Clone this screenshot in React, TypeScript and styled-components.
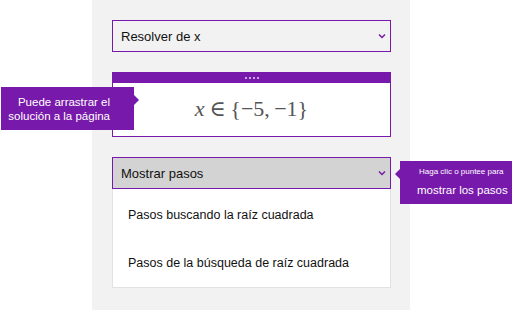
import * as React from 'react';
import styled, {createGlobalStyle} from 'styled-components';

const purple = '#7719aa';

const GlobalStyle = createGlobalStyle`
    body {
        margin: 0;
        background: #ffffff;
        font-family: "Liberation Sans", Arial, sans-serif;
    }
`;

const Page = styled.div`
    position: relative;
    width: 512px;
    height: 310px;
    display: flex;
    overflow: hidden;
`;

const Panel = styled.div`
    margin-left: 92px;
    width: 318px;
    height: 310px;
    box-sizing: border-box;
    padding: 20px 19px 0 20px;
    background: #f2f2f2;
    display: flex;
    flex-direction: column;
`;

const Select = styled.div<{ $active?: boolean }>`
    height: 32px;
    box-sizing: border-box;
    border: 1px solid ${purple};
    background: ${p => (p.$active ? '#d3d3d3' : '#f2f2f2')};
    display: flex;
    align-items: center;
    justify-content: space-between;
    padding: 0 4px 0 8px;
    font-size: 13px;
    color: #111;
`;

const Chevron = () => (
    <svg width="8" height="6" viewBox="0 0 8 6">
        <path d="M1 1.5 L4 4.5 L7 1.5" fill="none" stroke={purple} strokeWidth="1.5" />
    </svg>
);

const ResultCard = styled.div`
    margin-top: 20px;
    height: 65px;
    box-sizing: border-box;
    border: 1px solid ${purple};
    background: #fff;
    display: flex;
    flex-direction: column;
`;

const Grip = styled.div`
    height: 10px;
    background: ${purple};
    display: flex;
    justify-content: center;
    align-items: center;
    gap: 2px;
`;

const GripDot = styled.span`
    width: 2px;
    height: 2px;
    background: #c9a8de;
`;

const MathText = styled.div`
    flex: 1;
    display: flex;
    align-items: center;
    justify-content: center;
    font-family: "Liberation Serif", "DejaVu Serif", serif;
    font-size: 22px;
    color: #555;
    padding-bottom: 2px;
    white-space: nowrap;
`;

const Var = styled.i`
    margin-right: 5px;
`;

const StepsBlock = styled.div`
    margin-top: 20px;
    display: flex;
    flex-direction: column;
`;

const StepsList = styled.div`
    background: #fff;
    border: 1px solid #e2e2e2;
    border-top: none;
    padding-top: 2px;
`;

const StepItem = styled.div`
    height: 48px;
    display: flex;
    align-items: center;
    padding-left: 15px;
    font-size: 12.5px;
    color: #111;
`;

const Tip = styled.div<{ $left: number; $top: number; $width: number }>`
    position: absolute;
    left: ${p => p.$left}px;
    top: ${p => p.$top}px;
    width: ${p => p.$width}px;
    height: 43px;
    background: ${purple};
    color: #fff;
    box-sizing: border-box;
    display: flex;
    flex-direction: column;
    justify-content: center;
    white-space: nowrap;
`;

const ArrowRight = styled.span`
    position: absolute;
    right: -5px;
    top: 8px;
    border-style: solid;
    border-width: 5px 0 5px 5px;
    border-color: transparent transparent transparent ${purple};
`;

const ArrowLeft = styled.span`
    position: absolute;
    left: -5px;
    top: 8px;
    border-style: solid;
    border-width: 5px 5px 5px 0;
    border-color: transparent ${purple} transparent transparent;
`;

const DragTipText = styled.div`
    text-align: right;
    padding-right: 24px;
    font-size: 11.5px;
    line-height: 14px;
`;

const SmallLine = styled.div`
    font-size: 8px;
    line-height: 12px;
    padding-left: 19px;
`;

const BigLine = styled.div`
    font-size: 11.5px;
    line-height: 18px;
    padding-left: 17px;
    margin-top: 3px;
`;

export default function App() {
    return (
        <Page>
            <GlobalStyle />
            <Panel>
                <Select>
                    <span>Resolver de x</span>
                    <Chevron />
                </Select>
                <ResultCard>
                    <Grip>
                        <GripDot /><GripDot /><GripDot /><GripDot />
                    </Grip>
                    <MathText>
                        <Var>x</Var>∈&thinsp;{'{'}−5,&thinsp;−1{'}'}
                    </MathText>
                </ResultCard>
                <StepsBlock>
                    <Select $active>
                        <span>Mostrar pasos</span>
                        <Chevron />
                    </Select>
                    <StepsList>
                        <StepItem>Pasos buscando la raíz cuadrada</StepItem>
                        <StepItem>Pasos de la búsqueda de raíz cuadrada</StepItem>
                    </StepsList>
                </StepsBlock>
            </Panel>

            <Tip $left={1} $top={87} $width={133}>
                <DragTipText>
                    Puede arrastrar el<br />solución a la página
                </DragTipText>
                <ArrowRight />
            </Tip>

            <Tip $left={400} $top={161} $width={112}>
                <SmallLine>Haga clic o puntee para</SmallLine>
                <BigLine>mostrar los pasos</BigLine>
                <ArrowLeft />
            </Tip>
        </Page>
    );
}
